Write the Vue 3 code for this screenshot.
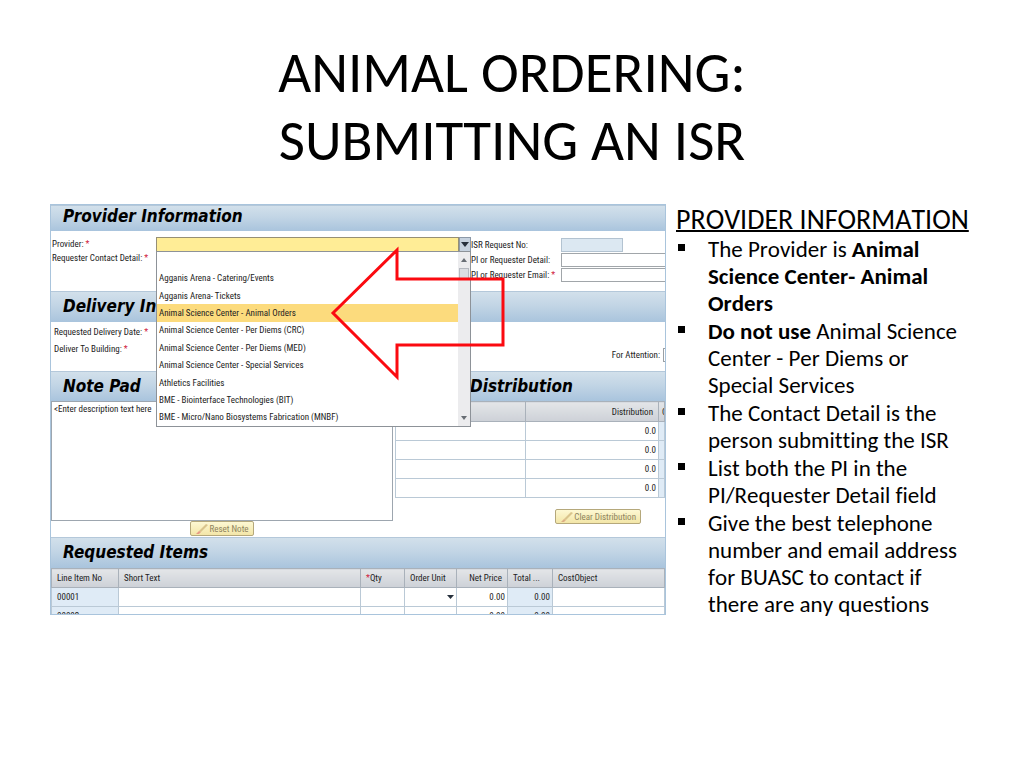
<script setup>
import { ref } from 'vue'

const providers = [
  '',
  'Agganis Arena - Catering/Events',
  'Agganis Arena- Tickets',
  'Animal Science Center - Animal Orders',
  'Animal Science Center - Per Diems (CRC)',
  'Animal Science Center - Per Diems (MED)',
  'Animal Science Center - Special Services',
  'Athletics Facilities',
  'BME - Biointerface Technologies (BIT)',
  'BME - Micro/Nano Biosystems Fabrication (MNBF)',
]
const active = ref(3)
const note = ref('<Enter description text here')
const shares = ['0.0', '0.0', '0.0', '0.0']
const items = ['00001', '00002']
</script>

<template>
  <main class="slide">
    <h1>ANIMAL ORDERING:<br />SUBMITTING AN ISR</h1>

    <div class="content">
      <section class="panel" aria-label="Internal service request form">
        <h2 class="bar first">Provider Information</h2>
        <div class="provider">
          <div class="labels">
            <label for="provider">Provider: <i>*</i></label>
            <span>Requester Contact Detail: <i>*</i></span>
          </div>
          <div class="combo">
            <input id="provider" class="combo-input" type="text" />
            <button class="combo-button" type="button" aria-label="Show providers">
              <svg viewBox="0 0 8 5"><path d="M0 0h8L4 5z" /></svg>
            </button>
            <div class="menu">
              <ul role="listbox" aria-label="Providers">
                <li
                  v-for="(name, i) in providers"
                  :key="i"
                  role="option"
                  :aria-selected="i === active"
                  :class="{ active: i === active }"
                  @click="active = i"
                >{{ name }}</li>
              </ul>
              <div class="scroll">
                <svg viewBox="0 0 8 5"><path d="M1 5h6L4 1z" /></svg>
                <span class="thumb"></span>
                <svg viewBox="0 0 8 5"><path d="M1 0h6L4 4z" /></svg>
              </div>
            </div>
          </div>
          <div class="request">
            <label for="isr">ISR Request No:</label>
            <input id="isr" class="short" type="text" readonly />
            <label for="detail">PI or Requester Detail:</label>
            <input id="detail" type="text" />
            <label for="email">PI or Requester Email: <i>*</i></label>
            <input id="email" type="text" />
          </div>
        </div>

        <h2 class="bar">Delivery In</h2>
        <div class="delivery">
          <div class="labels">
            <span>Requested Delivery Date: <i>*</i></span>
            <span>Deliver To Building: <i>*</i></span>
          </div>
          <label for="attention">For Attention:</label>
          <input id="attention" type="text" />
        </div>

        <div class="bar split">
          <h2>Note Pad</h2>
          <h2>Distribution</h2>
        </div>
        <div class="middle">
          <div class="notes-pad">
            <textarea v-model="note" aria-label="Note Pad"></textarea>
            <button class="action" type="button">
              <svg viewBox="0 0 14 12"><path d="M4 8 11 1l2 1-7 7z" fill="#d9c48c" /><path d="M1 11l3-3 2 1-2 2z" fill="#e79a86" /></svg>
              Reset Note
            </button>
          </div>
          <div class="distribution">
            <table>
              <colgroup><col class="c-name" /><col class="c-share" /><col /></colgroup>
              <thead><tr><th></th><th class="num">Distribution</th><th class="cut">C</th></tr></thead>
              <tbody>
                <tr v-for="(share, i) in shares" :key="i">
                  <td></td><td class="num">{{ share }}</td><td class="tint"></td>
                </tr>
              </tbody>
            </table>
            <button class="action" type="button">
              <svg viewBox="0 0 14 12"><path d="M4 8 11 1l2 1-7 7z" fill="#d9c48c" /><path d="M1 11l3-3 2 1-2 2z" fill="#dcae84" /></svg>
              Clear Distribution
            </button>
          </div>
        </div>

        <h2 class="bar">Requested Items</h2>
        <table class="items">
          <colgroup>
            <col class="i-line" /><col /><col class="i-qty" /><col class="i-unit" />
            <col class="i-price" /><col class="i-total" /><col class="i-cost" />
          </colgroup>
          <thead>
            <tr>
              <th>Line Item No</th><th>Short Text</th><th><i>*</i>Qty</th><th>Order Unit</th>
              <th class="num">Net Price</th><th>Total ...</th><th>CostObject</th>
            </tr>
          </thead>
          <tbody>
            <tr v-for="item in items" :key="item">
              <td class="tint">{{ item }}</td><td></td><td></td>
              <td class="num"><svg viewBox="0 0 8 5"><path d="M1 0h7L4.500 4z" /></svg></td>
              <td class="num">0.00</td><td class="num tint">0.00</td><td></td>
            </tr>
          </tbody>
        </table>

        <svg class="arrow" viewBox="0 0 176 136" aria-hidden="true">
          <path d="M3 67 67 4v29h106v66H67v32z" />
        </svg>
      </section>

      <section class="guide">
        <h3>PROVIDER INFORMATION</h3>
        <ul>
          <li>The Provider is <b>Animal Science Center- Animal Orders</b></li>
          <li><b>Do not use</b> Animal Science Center - Per Diems or Special Services</li>
          <li>The Contact Detail is the person submitting the ISR</li>
          <li>List both the PI in the PI/Requester Detail field</li>
          <li>Give the best telephone number and email address for BUASC to contact if there are any questions</li>
        </ul>
      </section>
    </div>
  </main>
</template>

<style>
body {
  background: #fff;
}
</style>

<style scoped>
* {
  box-sizing: border-box;
}
.slide {
  padding: 39px 50px;
  color: #000;
  font-family: Carlito, Calibri, "Noto Sans", sans-serif;
  font-kerning: none;
  font-variant-ligatures: none;
}
h1 {
  margin: 0 0 29px;
  font-size: 57px;
  line-height: 68px;
  font-weight: 400;
  text-align: center;
}
.content {
  display: grid;
  grid-template-columns: 2fr 1fr;
  align-items: start;
}
.panel {
  position: relative;
  overflow: hidden;
  max-height: 411px;
  border: 1px solid #a9c4dc;
  font: 9px/14px "Roboto Condensed", "Liberation Sans", sans-serif;
  color: #222;
}
.panel input,
.panel textarea,
.panel button {
  margin: 0;
  font: inherit;
  color: inherit;
}
i {
  color: #d0203c;
  font-style: normal;
}
h2 {
  margin: 0;
  color: #000;
  font: italic bold 17px/20px "DejaVu Sans Condensed", "DejaVu Sans", sans-serif;
}
.bar {
  height: 31px;
  padding: 4px 12px;
  border-top: 1px solid #b4c8da;
  background: linear-gradient(#d2e0eb, #c2d5e5 45%, #a9c4dd);
}
.first {
  height: 26px;
  padding: 0 12px;
}
.split {
  display: grid;
  grid-template-columns: 407px 1fr;
  height: 30px;
}
.provider {
  display: grid;
  grid-template-columns: 105px 315px 1fr;
  height: 60px;
  padding-top: 6px;
}
.labels {
  display: flex;
  flex-direction: column;
  padding-left: 1px;
  white-space: nowrap;
}
.combo {
  position: relative;
  display: flex;
  height: 15px;
}
.combo-input {
  flex: 1;
  min-width: 0;
  border: 1px solid #968f75;
  background: #ffed96;
}
.combo-button {
  display: flex;
  align-items: center;
  justify-content: center;
  width: 12px;
  padding: 0;
  border: 1px solid #8c99a8;
  background: #c6d2df;
}
.panel svg {
  width: 8px;
  height: 5px;
  fill: #26303c;
}
.menu {
  position: absolute;
  z-index: 2;
  top: 14px;
  left: 0;
  display: flex;
  width: 100%;
  height: 176px;
  border: 1px solid #8d9298;
  background: #fff;
}
.menu ul {
  display: flex;
  flex: 1;
  flex-direction: column;
  margin: 0;
  padding: 0;
  list-style: none;
}
.menu li {
  display: flex;
  flex: 1;
  align-items: center;
  padding-left: 2px;
  white-space: nowrap;
}
.menu li.active {
  background: #fcdb7d;
}
.scroll {
  display: flex;
  flex-direction: column;
  align-items: center;
  width: 12px;
  padding: 5px 0;
  background: #ececee;
}
.scroll svg {
  fill: #686d74;
}
.thumb {
  width: 10px;
  height: 11px;
  margin: 6px 0 auto;
  border: 1px solid #b5b9c0;
  background: #dcdee2;
}
.request {
  display: grid;
  grid-template-columns: 90px 1fr;
  grid-auto-rows: 15px;
  align-items: center;
  white-space: nowrap;
}
.request input {
  width: 100%;
  height: 14px;
  border: 1px solid #a1a6aa;
  border-right: 0;
  background: #fff;
}
.request .short {
  width: 62px;
  border: 1px solid #b3c3d1;
  background: #dce8f2;
}
.delivery {
  display: grid;
  grid-template-columns: 1fr auto 2px;
  column-gap: 3px;
  height: 49px;
  padding-top: 2px;
  align-items: center;
}
.delivery .labels {
  gap: 3px;
  align-self: start;
  padding: 1px 3px;
}
.delivery > label {
  padding-top: 14px;
}
.delivery input {
  width: 62px;
  height: 14px;
  margin-top: 14px;
  border: 1px solid #9aa0a5;
}
.middle {
  display: grid;
  grid-template-columns: 342px 1fr;
  column-gap: 2px;
  height: 136px;
}
.notes-pad,
.distribution {
  display: flex;
  flex-direction: column;
  align-items: center;
  min-width: 0;
}
textarea {
  display: block;
  width: 100%;
  height: 120px;
  padding: 0 2px;
  border: 1px solid #9da6af;
  resize: none;
}
.action {
  display: flex;
  align-items: center;
  height: 15px;
  padding: 0 4px;
  border: 1px solid #b5a87b;
  border-radius: 2px;
  background: linear-gradient(#fdf8d3, #f3e6a8);
}
.panel .action {
  color: #8e8460;
}
.panel .action svg {
  width: 14px;
  height: 12px;
}
.distribution .action {
  margin: 11px 24px 0 auto;
}
table {
  width: 100%;
  border-collapse: collapse;
  table-layout: fixed;
}
th,
td {
  height: 19px;
  padding: 0 5px;
  overflow: hidden;
  border: 1px solid #bac9d6;
  font-weight: 400;
  line-height: 14px;
  text-align: left;
  white-space: nowrap;
}
th {
  border-color: #a9b1ba;
  background: linear-gradient(#e3e5e8, #cdd1d7);
}
.distribution th {
  height: 20px;
}
.num {
  padding-right: 2px;
  text-align: right;
}
th.num {
  padding-right: 5px;
}
.cut {
  padding: 0 3px;
}
.tint {
  background: #dfebf6;
}
.c-name {
  width: 130px;
}
.c-share {
  width: 133px;
}
.i-line {
  width: 67px;
}
.i-qty {
  width: 44px;
}
.i-unit {
  width: 52px;
}
.i-price {
  width: 51px;
}
.i-total {
  width: 45px;
}
.i-cost {
  width: 112px;
}
.panel .arrow {
  position: absolute;
  z-index: 3;
  top: 41px;
  left: 279px;
  width: 176px;
  height: 136px;
  fill: none;
  stroke: #fb0a10;
  stroke-width: 3;
}
.guide {
  padding-left: 10px;
}
h3 {
  margin: 0;
  font-size: 28px;
  line-height: 32px;
  font-weight: 400;
  white-space: nowrap;
  text-decoration: underline;
  text-decoration-thickness: 2px;
}
.guide ul {
  margin: 0;
  padding: 0 8px 0 0;
  list-style: none;
  font-size: 23px;
  line-height: 27px;
}
.guide li {
  position: relative;
  margin-bottom: 1px;
  padding-left: 32px;
}
.guide li::before {
  position: absolute;
  top: 8px;
  left: 2px;
  width: 7px;
  height: 7px;
  background: #000;
  content: "";
}
</style>
